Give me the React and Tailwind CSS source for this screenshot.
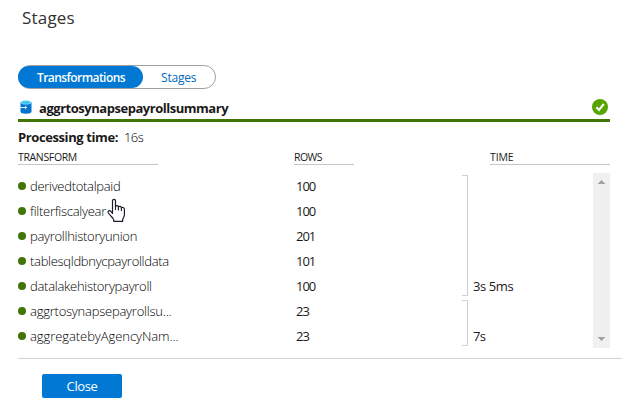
const transforms = [
  { name: "derivedtotalpaid", rows: "100", tracking: "tracking-[-0.3px]" },
  { name: "filterfiscalyear", rows: "100", tracking: "tracking-[-0.27px]" },
  { name: "payrollhistoryunion", rows: "201", tracking: "tracking-[-0.28px]" },
  { name: "tablesqldbnycpayrolldata", rows: "101", tracking: "tracking-[-0.3px]" },
  { name: "datalakehistorypayroll", rows: "100", tracking: "tracking-[-0.28px]" },
  { name: "aggrtosynapsepayrollsu...", rows: "23", tracking: "tracking-[-0.23px]" },
  { name: "aggregatebyAgencyNam...", rows: "23", tracking: "tracking-[-0.06px]" },
];

function DatabaseIcon() {
  return (
    <svg width="12" height="14" viewBox="0 0 12 14" className="shrink-0">
      <path d="M0.5 2.2V11.8C0.5 13 3 13.8 6 13.8S11.5 13 11.5 11.8V2.2Z" fill="#0672cb" />
      <ellipse cx="6" cy="2.4" rx="5.5" ry="2.1" fill="#7fdcf8" />
      <ellipse cx="6" cy="2.5" rx="4.2" ry="1.3" fill="#38c5ee" />
      <path d="M0 7.5H6.5M5 5.8L6.8 7.5L5 9.2" fill="none" stroke="#d9f1ff" strokeWidth="1" />
    </svg>
  );
}

function SuccessIcon() {
  return (
    <svg width="16" height="16" viewBox="0 0 16 16">
      <circle cx="8" cy="8" r="8" fill="#57a300" />
      <path d="M4.3 8.3L7 11L11.8 5" fill="none" stroke="#fff" strokeWidth="2.1" />
    </svg>
  );
}

function HandCursor() {
  return (
    <svg width="20" height="26" viewBox="0 0 20 26" className="absolute left-[107px] top-[198px]">
      <path
        d="M5.5 15.5V2.8C5.5 .9 8.5 .9 8.5 2.8V8.5C9 7.1 11.2 7.4 11.4 9C12.1 7.9 14.2 8.3 14.4 9.9C15.3 8.9 17.4 9.5 17.4 11.3V17C17.4 19 15.6 20.3 15.6 22V23.4H6.8V21.8C6.8 20.4 3 17.7 1.3 14.7C.4 13 2.5 12 3.7 13.2Z"
        fill="#fff"
        stroke="#1c1c2a"
        strokeWidth="1.2"
        strokeLinejoin="round"
      />
      <path d="M8.5 8V12M11.4 9V12.5M14.4 10V13" fill="none" stroke="#1c1c2a" strokeWidth="1.1" />
    </svg>
  );
}

function ScrollBar() {
  return (
    <div className="ml-auto flex h-[175px] w-[17px] flex-col items-center justify-between bg-[#f0f0f0] py-[7px]">
      <svg width="7" height="4" viewBox="0 0 7 4" shapeRendering="crispEdges">
        <path d="M0 4L3.5 0L7 4Z" fill="#a3a3a3" />
      </svg>
      <svg width="7" height="4" viewBox="0 0 7 4" shapeRendering="crispEdges">
        <path d="M0 0L3.5 4L7 0Z" fill="#a3a3a3" />
      </svg>
    </div>
  );
}

export default function App() {
  return (
    <div className="relative flex h-[413px] w-[622px] flex-col overflow-hidden bg-white pl-[18px] font-['Open_Sans','Noto_Sans',sans-serif] text-[13px] leading-[20px] text-[#1b1a19]">
      <h1 className="mt-[6px] h-[24px] pl-[4px] text-[17px] leading-[24px] text-[#323130]">
        <span className="tracking-[0.2px]">Stages</span>
      </h1>

      <div className="mt-[35px] flex h-[24px] w-[198px] rounded-full border border-[#a19f9d] text-[12px] leading-[23px]">
        <div className="-ml-px w-[125px] rounded-full bg-[#0078d4] pl-[19px] font-semibold text-white">
          <span className="tracking-[-0.57px]">Transformations</span>
        </div>
        <div className="pl-[18px] text-[#0067c0]">
          <span className="tracking-[-0.2px]">Stages</span>
        </div>
      </div>

      <div className="mt-[9px] flex h-[24px] w-[592px] items-start border-b-[3px] border-[#417505]">
        <div className="ml-[2px] mt-[2px]"><DatabaseIcon /></div>
        <span className="ml-[7px] font-bold leading-[20px] tracking-[-0.47px]">aggrtosynapsepayrollsummary</span>
        <div className="ml-auto mr-[2px] mt-px"><SuccessIcon /></div>
      </div>

      <div className="mt-[5px] flex h-[20px]">
        <span className="w-[106px] font-bold tracking-[-0.4px]">Processing time:</span>
        <span className="font-[350] tracking-[-0.6px] text-black">16s</span>
      </div>

      <div className="mt-[1px] flex h-[17px] w-[592px] text-[10.5px] leading-[18px]">
        <div className="w-[140px] border-b border-[#c8c6c4]"><span className="tracking-[-0.35px]">TRANSFORM</span></div>
        <div className="ml-[136px] w-[60px] border-b border-[#c8c6c4]"><span className="tracking-[-0.55px]">ROWS</span></div>
        <div className="ml-auto w-[120px] border-b border-[#c8c6c4]"><span className="tracking-[-0.1px]">TIME</span></div>
      </div>

      <div className="mt-[8px] flex h-[175px] w-[592px]">
        <div className="w-[444px]">
          {transforms.map((t) => (
            <div key={t.name} className="flex h-[25px] items-center">
              <span className="mt-px h-[8px] w-[8px] rounded-full bg-[#417505]" />
              <span className={`ml-[4px] w-[266px] whitespace-nowrap pt-px font-[350] text-black ${t.tracking}`}>{t.name}</span>
              <span className="pt-px tracking-[-1px]">{t.rows}</span>
            </div>
          ))}
        </div>
        <div className="flex w-[6px] flex-col pt-[2px]">
          <div className="h-[121px] border-y border-r border-[#d2d0ce]" />
          <div className="mt-[4px] h-[46px] border-y border-r border-[#d2d0ce]" />
        </div>
        <div className="ml-[5px] flex flex-col pt-[103px]">
          <span className="tracking-[-0.4px]">3s 5ms</span>
          <span className="mt-[30px] tracking-[-0.8px]">7s</span>
        </div>
        <ScrollBar />
      </div>

      <div className="mt-[10px] border-t border-[#d8d6d4] pl-[24px] pt-[15px]">
        <button className="block h-[24px] w-[80px] rounded-[2px] bg-[#0078d4] text-[13px] leading-[24px] text-white">
          <span className="tracking-[-0.4px]">Close</span>
        </button>
      </div>

      <HandCursor />
    </div>
  );
}
